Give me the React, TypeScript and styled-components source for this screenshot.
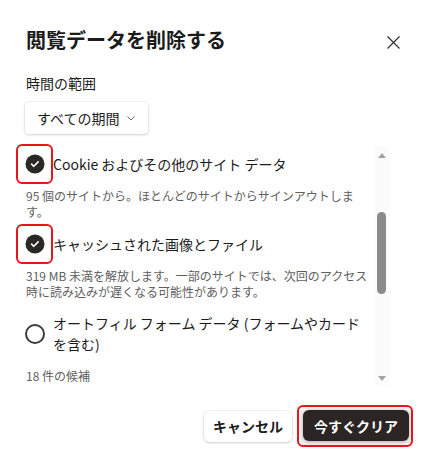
import styled, { createGlobalStyle } from "styled-components";

const GlobalStyle = createGlobalStyle`
  html, body {
    margin: 0;
    background: #ffffff;
  }
  body {
    font-family: "Noto Sans CJK JP", "Noto Sans", sans-serif;
    color: #1b1b1b;
  }
  * {
    box-sizing: border-box;
  }
`;

const Dialog = styled.div`
  width: 434px;
  height: 465px;
  padding: 26px 26px 0 26px;
  display: flex;
  flex-direction: column;
  background: #fff;
`;

const Header = styled.div`
  display: flex;
  align-items: center;
  justify-content: space-between;
  height: 28px;
`;

const Title = styled.h1`
  margin: 0;
  font-size: 20px;
  line-height: 28px;
  font-weight: 700;
  color: #1b1b1b;
`;

const CloseButton = styled.button`
  width: 30px;
  height: 30px;
  margin-top: 4px;
  border: 0;
  background: none;
  padding: 0;
  display: grid;
  place-items: center;
  cursor: pointer;
`;

const SectionLabel = styled.div`
  margin-top: 19px;
  font-size: 14px;
  line-height: 20px;
`;

const Dropdown = styled.button`
  margin-top: 9px;
  align-self: flex-start;
  height: 32px;
  width: 123px;
  margin-left: -1px;
  padding: 0 13px 0 12px;
  display: flex;
  align-items: center;
  justify-content: space-between;
  border: 0;
  border-radius: 4px;
  background: #fff;
  box-shadow: 0 0 0 1px rgba(0, 0, 0, 0.04), 0 1px 3px rgba(0, 0, 0, 0.16);
  font-family: inherit;
  font-size: 14px;
  color: #1b1b1b;
`;

const ScrollArea = styled.div`
  margin-top: 10px;
  margin-left: -10px;
  height: 241px;
  display: flex;
  overflow: hidden;
`;

const List = styled.div`
  width: 356px;
  display: flex;
  flex-direction: column;
  gap: 4px;
`;

const Item = styled.div`
  display: flex;
  flex-direction: column;
  gap: 4px;
`;

const Row = styled.label`
  display: flex;
  align-items: center;
  min-height: 40px;
`;

const CheckBox = styled.span<{ $highlight?: boolean }>`
  flex: none;
  width: 37px;
  height: 40px;
  display: grid;
  place-items: center;
  border-radius: 6px;
  border: 2px solid ${(p) => (p.$highlight ? "#e8161c" : "transparent")};
`;

const Label = styled.span`
  font-size: 14px;
  line-height: 21px;
  padding: 9px 0;
  color: #1b1b1b;
`;

const Desc = styled.div`
  padding-left: 10px;
  font-size: 12px;
  line-height: 16px;
  color: #606060;
`;

const Scrollbar = styled.div`
  margin-left: 2px;
  margin-top: 2px;
  width: 15px;
  display: flex;
  flex-direction: column;
  align-items: center;
  background: #fbfbfb;
`;

const Arrow = styled.div<{ $h: number }>`
  height: ${(p) => p.$h}px;
  display: grid;
  place-items: center;
`;

const Track = styled.div`
  flex: 1;
`;

const Thumb = styled.div`
  margin-top: 48px;
  width: 9px;
  height: 82px;
  border-radius: 5px;
  background: #8b8b8b;
`;

const Footer = styled.div`
  margin-top: 20px;
  margin-right: -5px;
  display: flex;
  justify-content: flex-end;
  align-items: center;
  gap: 5px;
`;

const Button = styled.button<{ $primary?: boolean }>`
  height: 31px;
  padding: 0 ${(p) => (p.$primary ? 11 : 9)}px;
  border: 0;
  border-radius: 6px;
  font-family: inherit;
  font-size: 14px;
  font-weight: 700;
  background: ${(p) => (p.$primary ? "#2b2623" : "#fff")};
  color: ${(p) => (p.$primary ? "#fff" : "#1b1b1b")};
  box-shadow: ${(p) =>
    p.$primary
      ? "0 1px 4px rgba(0, 0, 0, 0.3)"
      : "0 0 0 1px rgba(0, 0, 0, 0.04), 0 1px 3px rgba(0, 0, 0, 0.16)"};
`;

const Highlight = styled.div`
  padding: 3px 2px 4px 4px;
  border: 2px solid #e8161c;
  border-radius: 6px;
  background: #f4f4f4;
`;

function Circle({ checked }: { checked?: boolean }) {
  if (checked)
    return (
      <svg width="20" height="20" viewBox="0 0 20 20">
        <circle cx="10" cy="10" r="9.5" fill="#2b2725" />
        <path d="M6.6 10.2 L8.8 12.3 L13.2 7.9" fill="none" stroke="#fff" strokeWidth="1.6" strokeLinecap="round" strokeLinejoin="round" />
      </svg>
    );
  return (
    <svg width="20" height="20" viewBox="0 0 20 20">
      <circle cx="10" cy="10" r="9" fill="none" stroke="#3c3c3c" strokeWidth="2" />
    </svg>
  );
}

const items = [
  {
    label: "Cookie およびその他のサイト データ",
    desc: "95 個のサイトから。ほとんどのサイトからサインアウトします。",
    checked: true,
  },
  {
    label: "キャッシュされた画像とファイル",
    desc: "319 MB 未満を解放します。一部のサイトでは、次回のアクセス時に読み込みが遅くなる可能性があります。",
    checked: true,
  },
  {
    label: "オートフィル フォーム データ (フォームやカードを含む)",
    desc: "18 件の候補",
    checked: false,
  },
];

export default function App() {
  return (
    <>
      <GlobalStyle />
      <Dialog>
        <Header>
          <Title>閲覧データを削除する</Title>
          <CloseButton aria-label="閉じる">
            <svg width="13" height="13" viewBox="0 0 13 13">
              <path d="M0.5 0.5 L12.5 12.5 M12.5 0.5 L0.5 12.5" stroke="#303030" strokeWidth="1.2" />
            </svg>
          </CloseButton>
        </Header>
        <SectionLabel>時間の範囲</SectionLabel>
        <Dropdown>
          すべての期間
          <svg width="8" height="5" viewBox="0 0 8 5">
            <path d="M0.5 0.5 L4 4 L7.5 0.5" fill="none" stroke="#666" strokeWidth="1" />
          </svg>
        </Dropdown>
        <ScrollArea>
          <List>
            {items.map((it) => (
              <Item key={it.label}>
                <Row>
                  <CheckBox $highlight={it.checked}>
                    <Circle checked={it.checked} />
                  </CheckBox>
                  <Label>{it.label}</Label>
                </Row>
                <Desc>{it.desc}</Desc>
              </Item>
            ))}
          </List>
          <Scrollbar>
            <Arrow $h={18}>
              <svg width="8" height="5" viewBox="0 0 8 5">
                <path d="M0 5 L4 0 L8 5 Z" fill="#a3a3a3" />
              </svg>
            </Arrow>
            <Track>
              <Thumb />
            </Track>
            <Arrow $h={14}>
              <svg width="8" height="5" viewBox="0 0 8 5">
                <path d="M0 0 L4 5 L8 0 Z" fill="#a3a3a3" />
              </svg>
            </Arrow>
          </Scrollbar>
        </ScrollArea>
        <Footer>
          <Button>キャンセル</Button>
          <Highlight>
            <Button $primary>今すぐクリア</Button>
          </Highlight>
        </Footer>
      </Dialog>
    </>
  );
}
